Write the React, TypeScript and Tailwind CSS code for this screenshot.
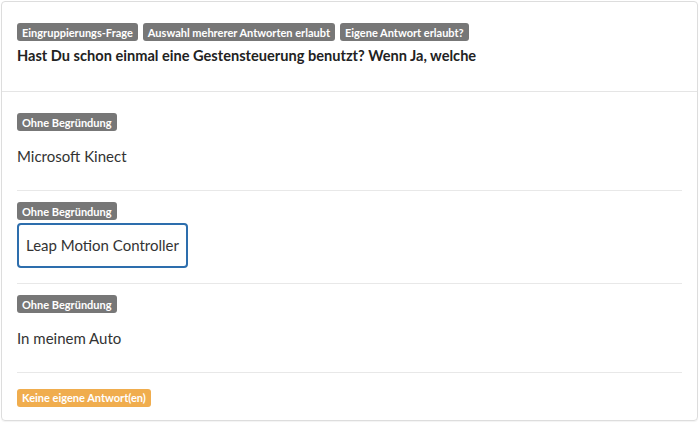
const badges = ['Eingruppierungs-Frage', 'Auswahl mehrerer Antworten erlaubt', 'Eigene Antwort erlaubt?'];

const answers = [
  { text: 'Microsoft Kinect', selected: false },
  { text: 'Leap Motion Controller', selected: true },
  { text: 'In meinem Auto', selected: false },
];

function Badge({ children, orange = false }: { children: string; orange?: boolean }) {
  return (
    <span
      className={`inline-flex h-[18px] items-center rounded-[3px] px-[5px] text-[11px] font-bold leading-none text-white ${
        orange ? 'bg-[#f0ad4e]' : 'bg-[#777]'
      }`}
    >
      {children}
    </span>
  );
}

export default function App() {
  return (
    <div className="h-[424px] w-[700px] bg-white p-px font-['Lato','Noto_Sans',sans-serif] text-[#333]">
      <div className="flex h-[420px] w-[697px] flex-col rounded-[4px] border border-[#ddd] shadow-[0_1px_1px_rgba(0,0,0,0.05)]">
        {/* Frage */}
        <div className="border-b border-[#e5e5e5] px-[15px] pt-[21px] pb-[25px]">
          <div className="flex gap-[5px]">
            {badges.map((b) => (
              <Badge key={b}>{b}</Badge>
            ))}
          </div>
          <h3 className="mt-[5px] text-[14.6px] leading-[20px] font-bold text-[#222]">
            Hast Du schon einmal eine Gestensteuerung benutzt? Wenn Ja, welche
          </h3>
        </div>

        {/* Antworten */}
        <div className="px-[15px] pt-[21px]">
          {answers.map((a, i) => (
            <div
              key={a.text}
              className={`flex flex-col items-start ${i > 0 ? 'border-t border-[#e8e8e8] pt-[11px]' : ''}`}
            >
              <Badge>Ohne Begründung</Badge>
              <div
                className={`mt-[3px] flex items-center rounded-[4px] text-[15px] ${
                  a.selected
                    ? 'mb-[15px] h-[45px] border-2 border-[#2d6ead] px-[7px]'
                    : 'mb-[12px] h-[44px] border-0 px-0'
                }`}
              >
                {a.text}
              </div>
            </div>
          ))}
          <div className="border-t border-[#e8e8e8] pt-[11px]">
            <Badge orange>Keine eigene Antwort(en)</Badge>
          </div>
        </div>
      </div>
    </div>
  );
}
